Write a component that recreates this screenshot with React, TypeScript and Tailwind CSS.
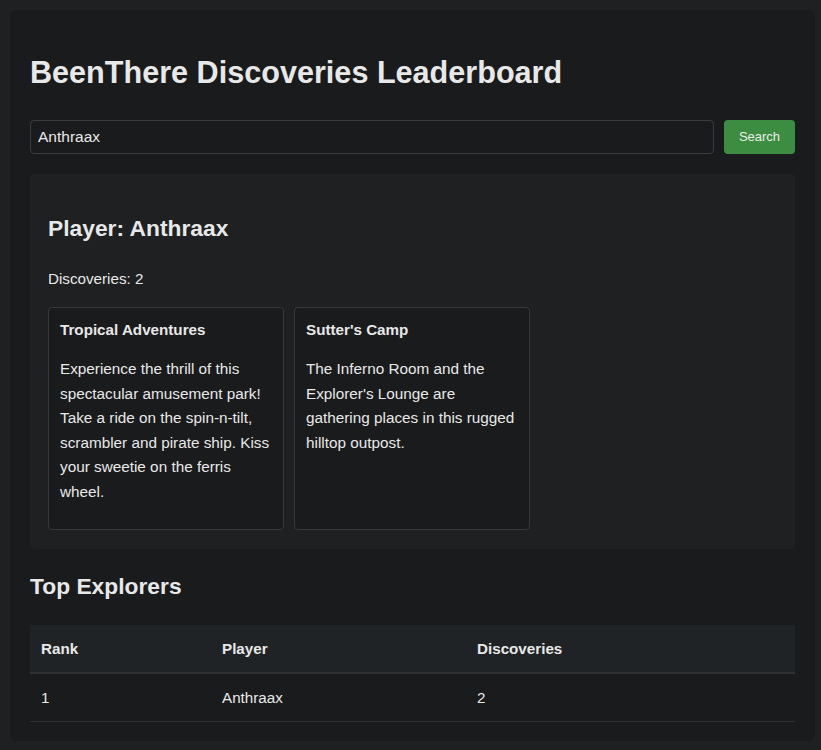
const discoveries = [
  {
    name: "Tropical Adventures",
    description:
      "Experience the thrill of this spectacular amusement park! Take a ride on the spin-n-tilt, scrambler and pirate ship. Kiss your sweetie on the ferris wheel.",
  },
  {
    name: "Sutter's Camp",
    description:
      "The Inferno Room and the Explorer's Lounge are gathering places in this rugged hilltop outpost.",
  },
];

const leaders = [{ rank: 1, player: "Anthraax", count: 2 }];

export default function App() {
  return (
    <div className="min-h-screen bg-[#1e2022] py-[10px] pl-[10px] pr-[6px] font-['Liberation_Sans',Arial,sans-serif] text-[#e8e8e8]">
      <div className="rounded-[6px] bg-[#1a1b1d] px-5 pt-[45px] pb-[19px]">
        <h1 className="mb-[31px] text-[30.6px] font-bold leading-[34px]">BeenThere Discoveries Leaderboard</h1>

        {/* search */}
        <div className="flex gap-[10px]">
          <input
            type="text"
            defaultValue="Anthraax"
            className="h-[34px] flex-1 rounded-[4px] border border-[#3a3d40] bg-[#1a1b1d] px-[7px] text-[15.5px] text-[#e8e8e8] outline-none"
          />
          <button className="h-[34px] w-[71px] rounded-[4px] bg-[#3c8c41] text-[13px] text-[#e8efe8]">Search</button>
        </div>

        {/* player result */}
        <div className="mt-5 rounded-[4px] bg-[#1e2022] px-[18px] pt-[42px] pb-[19px]">
          <h2 className="text-[22.8px] font-bold leading-[25px]">Player: Anthraax</h2>
          <p className="mt-[29px] text-[15.2px] leading-[17px]">Discoveries: 2</p>
          <div className="mt-[20px] flex gap-[10px]">
            {discoveries.map((d) => (
              <div
                key={d.name}
                className="w-[236px] rounded-[4px] border border-[#36393c] bg-[#1a1b1d] px-[11px] pt-[13px] pb-[25px]"
              >
                <h3 className="text-[15.2px] font-bold leading-[17px]">{d.name}</h3>
                <p className="mt-[19px] text-[15.3px] leading-[24.5px]">{d.description}</p>
              </div>
            ))}
          </div>
        </div>

        {/* leaderboard */}
        <h2 className="mt-[25px] text-[22.8px] font-bold leading-[25px]">Top Explorers</h2>
        <table className="mt-[26px] w-full border-collapse text-left text-[15.2px]">
          <thead>
            <tr className="border-b-2 border-[#2e3134] bg-[#202325]">
              <th className="w-[181px] px-[11px] py-[15px] font-bold leading-[17px]">Rank</th>
              <th className="w-[255px] px-[11px] py-[15px] font-bold leading-[17px]">Player</th>
              <th className="px-[11px] py-[15px] font-bold leading-[17px]">Discoveries</th>
            </tr>
          </thead>
          <tbody>
            {leaders.map((l) => (
              <tr key={l.rank} className="border-b border-[#2e3134]">
                <td className="px-[11px] py-[15px] leading-[17px]">{l.rank}</td>
                <td className="px-[11px] py-[15px] leading-[17px]">{l.player}</td>
                <td className="px-[11px] py-[15px] leading-[17px]">{l.count}</td>
              </tr>
            ))}
          </tbody>
        </table>
      </div>
    </div>
  );
}
